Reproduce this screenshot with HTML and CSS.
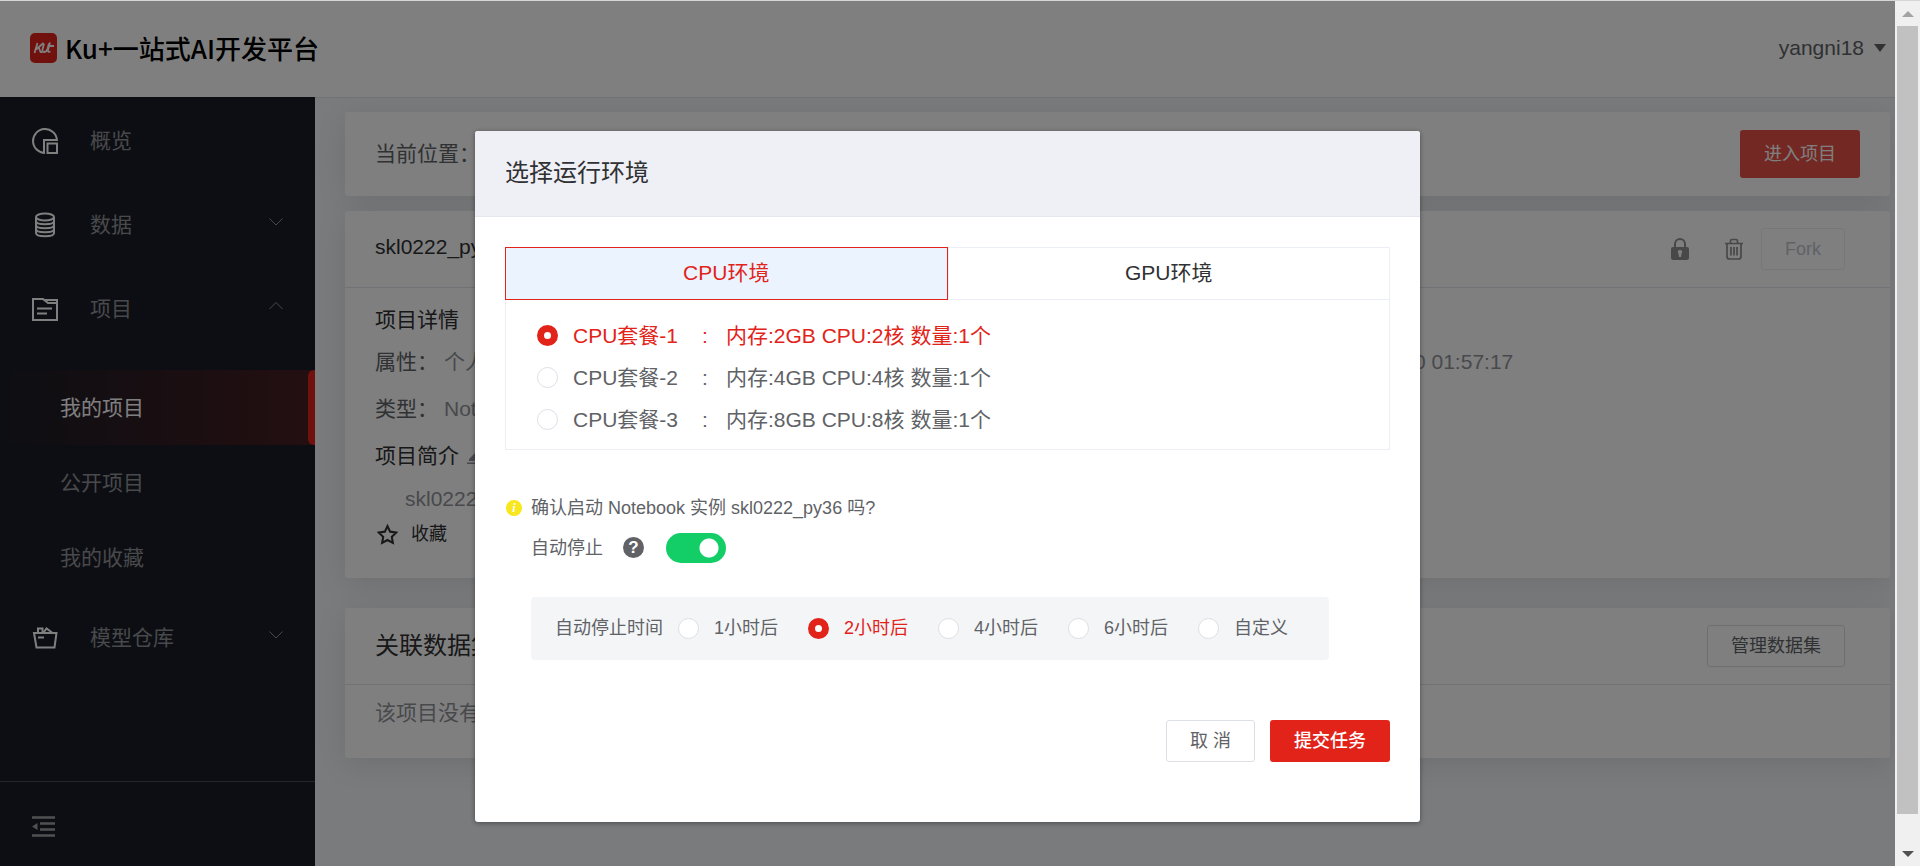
FILE: index.html
```html
<!DOCTYPE html>
<html lang="zh-CN">
<head>
<meta charset="utf-8">
<meta name="viewport" content="width=device-width, initial-scale=1">
<title>Ku+一站式AI开发平台</title>
<link rel="stylesheet" href="styles.css">
</head>
<body>
<div class="window">
  <div class="viewport">
    <header class="topbar">
      <div class="brand">
        <svg class="brand-logo" viewBox="0 0 27 30"><rect width="27" height="30" rx="5" fill="#e2231a"/><g fill="none" stroke="#fff" stroke-width="1.800" stroke-linejoin="round"><path d="M7.500 10 4.500 20M13.500 10 6 16.500M9 15l1.500 4h2"/><path d="M14 10.500l-1.500 6q-.3 3 2 2.500t3-3l1.500-5.500M20 9.500l-2 7.500q-.3 2.500 2.500 1.500M17.500 13h6.500"/></g></svg>
        <h1 class="brand-name">Ku+一站式AI开发平台</h1>
      </div>
      <button class="user" type="button">yangni18 <span class="caret"></span></button>
    </header>
    <div class="layout">
      <nav class="sidebar">
        <ul class="menu">
          <li><a class="menu-item" href="#"><svg class="menu-icon" viewBox="0 0 26 26"><path d="M13 25A12 12 0 1 1 25 12H12v13" /><rect x="15.500" y="15.500" width="9.500" height="9.500"/></svg><span>概览</span></a></li>
          <li><a class="menu-item" href="#"><svg class="menu-icon" viewBox="0 0 26 26"><ellipse cx="13" cy="5" rx="9" ry="3.500"/><path d="M4 5v16c0 4.300 18 4.300 18 0V5M4 9c0 4.300 18 4.300 18 0M4 13c0 4.300 18 4.300 18 0M4 17c0 4.300 18 4.300 18 0"/></svg><span>数据</span><svg class="chevron" viewBox="0 0 14 8"><path d="M.5.500 7 7 13.500.500"/></svg></a></li>
          <li><a class="menu-item" href="#"><svg class="menu-icon" viewBox="0 0 26 26"><path d="M1 3h10l5 4h9v17H1zM12 4h13v4M5 12.500h15M5 17.500h10"/></svg><span>项目</span><svg class="chevron" viewBox="0 0 14 8"><path d="M.5 7 7 .500 13.500 7"/></svg></a>
            <ul class="submenu">
              <li><a class="sub-item active" href="#">我的项目</a></li>
              <li><a class="sub-item" href="#">公开项目</a></li>
              <li><a class="sub-item" href="#">我的收藏</a></li>
            </ul>
          </li>
          <li><a class="menu-item" href="#"><svg class="menu-icon" viewBox="0 0 26 26"><path d="M2 8h22.500l-2 14.500h-18zM6 8V3.500h4.500V8M12 7l2.500-3.500L20 7.500M6 12.500h6"/></svg><span>模型仓库</span><svg class="chevron" viewBox="0 0 14 8"><path d="M.5.500 7 7 13.500.500"/></svg></a></li>
        </ul>
        <button class="collapse" type="button" aria-label="收起菜单"><svg viewBox="0 0 23 22"><path d="M0 1.500h23M8 7.500h15M8 13.500h15M0 19.500h23" stroke-width="2.500"/><path class="solid" d="M0 10.500 5.500 7v7z"/></svg></button>
      </nav>
      <main class="content">
        <section class="card location">
          <span>当前位置：</span>
          <button class="btn btn-enter" type="button">进入项目</button>
        </section>
        <section class="card project">
          <div class="card-head">
            <h2 class="project-name">skl0222_py36</h2>
            <div class="tools">
              <button class="icon-btn" type="button" aria-label="锁定"><svg viewBox="0 0 18 22"><path d="M4 10V6a5 5 0 0 1 10 0v4" fill="none" stroke="currentColor" stroke-width="2"/><path fill="currentColor" fill-rule="evenodd" d="M2 9h14q2 0 2 2v9q0 2-2 2H2q-2 0-2-2v-9q0-2 2-2zM9 12a2 2 0 0 0-1.500 3.500L8 19h2l.5-3.500A2 2 0 0 0 9 12z"/></svg></button>
              <button class="icon-btn" type="button" aria-label="删除"><svg viewBox="0 0 18 22"><path d="M0 5.500h18M5.500 5V3q0-1.500 1.500-1.500h4q1.500 0 1.500 1.500v2M2 6v12.500Q2 21 4.500 21h9q2.500 0 2.500-2.500V6M6 9v8.500M9 9v8.500M12 9v8.500" fill="none" stroke="currentColor" stroke-width="1.700"/></svg></button>
              <button class="btn btn-plain btn-fork" type="button" disabled>Fork</button>
            </div>
          </div>
          <div class="project-body">
            <h3 class="sub-title">项目详情</h3>
            <div class="info"><span class="key">属性：</span><span class="val">个人</span><span class="created">0 01:57:17</span></div>
            <div class="info"><span class="key">类型：</span><span class="val">Notebook</span></div>
            <h3 class="sub-title intro">项目简介 <svg class="pencil" viewBox="0 0 18 18"><path d="M2 12 12 2l4 4L7 14H2zM0 15.500h18V17H0z"/></svg></h3>
            <p class="desc">skl0222_py36</p>
            <button class="favorite" type="button"><svg viewBox="0 0 20 20"><path d="M10 2l2.500 5.300 5.800.8-4.200 4.100 1 5.800L10 15.200 4.900 18l1-5.800L1.700 8.100l5.800-.8z"/></svg>收藏</button>
          </div>
        </section>
        <section class="card dataset">
          <div class="card-head">
            <h2 class="dataset-title">关联数据集</h2>
            <button class="btn btn-plain" type="button">管理数据集</button>
          </div>
          <p class="empty">该项目没有</p>
        </section>
      </main>
    </div>
    <div class="overlay">
      <form class="dialog" role="dialog" aria-labelledby="dialog-title">
        <h2 class="dialog-title" id="dialog-title">选择运行环境</h2>
        <div class="dialog-body">
          <div class="env">
            <div class="tabs" role="tablist">
              <button class="tab selected" type="button" role="tab" aria-selected="true">CPU环境</button>
              <button class="tab" type="button" role="tab" aria-selected="false">GPU环境</button>
            </div>
            <div class="plans">
              <label class="plan"><input class="radio" type="radio" name="plan" checked><span class="plan-name">CPU套餐-1</span><span class="colon">:</span><span>内存:2GB CPU:2核 数量:1个</span></label>
              <label class="plan"><input class="radio" type="radio" name="plan"><span class="plan-name">CPU套餐-2</span><span class="colon">:</span><span>内存:4GB CPU:4核 数量:1个</span></label>
              <label class="plan"><input class="radio" type="radio" name="plan"><span class="plan-name">CPU套餐-3</span><span class="colon">:</span><span>内存:8GB CPU:8核 数量:1个</span></label>
            </div>
          </div>
          <div class="confirm">
            <span class="info-dot">i</span>
            <p class="question">确认启动 Notebook 实例 skl0222_py36 吗?</p>
          </div>
          <div class="auto-stop">
            <label for="auto-stop">自动停止</label>
            <span class="help">?</span>
            <input class="switch" id="auto-stop" type="checkbox" role="switch" checked>
          </div>
          <div class="times">
            <span>自动停止时间</span>
            <div class="time-list">
              <label class="time"><input class="radio" type="radio" name="time"><span>1小时后</span></label>
              <label class="time"><input class="radio" type="radio" name="time" checked><span>2小时后</span></label>
              <label class="time"><input class="radio" type="radio" name="time"><span>4小时后</span></label>
              <label class="time"><input class="radio" type="radio" name="time"><span>6小时后</span></label>
              <label class="time"><input class="radio" type="radio" name="time"><span>自定义</span></label>
            </div>
          </div>
          <div class="actions">
            <button class="btn btn-plain" type="button">取 消</button>
            <button class="btn btn-submit" type="submit">提交任务</button>
          </div>
        </div>
      </form>
    </div>
  </div>
  <div class="scrollbar" aria-hidden="true">
    <span class="arrow up"></span>
    <span class="thumb"></span>
    <span class="arrow down"></span>
  </div>
</div>
</body>
</html>
```
FILE: styles.css
```css
* { box-sizing: border-box; }
body {
  margin: 0;
  color: #606266;
  font-family: "Liberation Sans", "Noto Sans CJK SC", sans-serif;
  font-size: 21px;
  line-height: 30px;
}
h1, h2, h3, p, ul { margin: 0; padding: 0; font-weight: 400; }
ul { list-style: none; }
a { color: inherit; text-decoration: none; }
button { margin: 0; padding: 0; border: 0; background: none; color: inherit; font: inherit; cursor: pointer; }
svg { display: block; }

.window { display: flex; height: 100vh; border-top: 1px solid #d4d6d8; overflow: hidden; }
.viewport { position: relative; display: flex; flex: 1; flex-direction: column; min-width: 0; }

.topbar { display: flex; align-items: center; justify-content: space-between; height: 96px; padding: 0 9px 2px 30px; background: #fff; }
.brand { display: flex; align-items: center; gap: 8px; }
.brand-logo { width: 27px; height: 30px; }
.brand-name { color: #000; font-family: "Noto Sans CJK SC", sans-serif; font-size: 26px; font-weight: 500; white-space: nowrap; }
.user { display: flex; align-items: center; gap: 10px; color: #606266; }
.caret { border: 6px solid transparent; border-top: 8px solid #606266; border-bottom: 0; }

.layout { display: flex; flex: 1; min-height: 0; }
.sidebar { display: flex; flex-direction: column; justify-content: space-between; width: 315px; background: #1a1c26; color: #909297; }
.menu { padding-top: 2px; }
.menu-item { display: flex; align-items: center; height: 84px; padding: 0 32px; }
.menu-item span { flex: 1; margin-left: 32px; }
.menu-icon { width: 26px; height: 26px; fill: none; stroke: #fff; stroke-width: 2; }
.chevron { width: 14px; height: 8px; margin-bottom: 6px; fill: none; stroke: #909297; stroke-width: 1; }
.submenu { padding: 19px 0 1px; }
.sub-item { display: flex; align-items: center; justify-content: space-between; height: 75px; padding-left: 60px; }
.sub-item.active { background: linear-gradient(90deg, #1a1c26, #481e22); color: #fff; }
.sub-item.active::after { align-self: stretch; width: 7px; border-radius: 6px 0 0 6px; background: #e2231a; content: ""; }
.collapse { height: 85px; padding: 5px 0 0 32px; border-top: 1px solid #4a4b52; }
.collapse svg { width: 23px; height: 22px; fill: none; stroke: #a0a1a5; }
.collapse .solid { fill: #a0a1a5; stroke: none; }

.content { display: flex; flex: 1; flex-direction: column; min-width: 0; padding: 14px 5px 0 30px; border-top: 1px solid #e2e4ea; background: #f4f6fa; overflow: hidden; }
.card { flex: none; border-radius: 3px; background: #fff; box-shadow: 0 6px 30px rgba(0, 0, 0, 0.1); }
.location { display: flex; align-items: center; justify-content: space-between; height: 84px; margin-bottom: 15px; padding: 0 30px; }
.card-head { display: flex; align-items: center; justify-content: space-between; height: 77px; padding: 0 45px 0 30px; border-bottom: 1px solid #e2e4ea; }
.project { margin-bottom: 30px; }
.project-name { padding-bottom: 5px; color: #303133; font-size: 21px; }
.tools { display: flex; align-items: center; }
.icon-btn { margin-right: 36px; color: #909090; }
.icon-btn svg { width: 18px; height: 22px; }
.icon-btn + .btn { margin-left: -18px; }
.project-body { padding: 17px 30px 29px; }
.sub-title { color: #303133; font-size: 21px; }
.info { display: flex; height: 47px; padding-top: 12px; }
.info .key { width: 69px; }
.info .val { width: 970px; color: #909399; }
.created { color: #909399; }
.intro { display: flex; align-items: center; gap: 8px; padding-top: 12px; }
.pencil { width: 18px; height: 18px; fill: #909399; }
.desc { padding: 13px 30px 0; color: #909399; }
.favorite { display: flex; align-items: center; gap: 13px; margin-top: 5px; padding-left: 2px; color: #303133; font-size: 18px; }
.favorite svg { width: 21px; height: 21px; fill: none; stroke: #303133; stroke-width: 2; }
.dataset-title { color: #303133; font-size: 24px; }
.empty { padding: 13px 30px 30px; color: #909399; }

.btn { height: 42px; padding: 0 24px; border-radius: 3px; font-size: 18px; white-space: nowrap; }
.btn-plain { padding: 0 23px; border: 1px solid #dcdfe6; background: #fff; color: #606266; }
.btn-plain:disabled { border-color: #ebeef5; color: #c0c4cc; }
.btn-enter { height: 48px; background: #e75048; color: #fff; }
.btn-submit { background: #e2231a; color: #fff; font-weight: 500; }

.overlay { position: absolute; inset: 0; display: flex; align-items: flex-start; justify-content: center; padding-top: 15vh; background: rgba(0, 0, 0, 0.5); }
.dialog { width: 90%; max-width: 945px; border-radius: 3px; background: #fff; box-shadow: 0 1px 5px rgba(0, 0, 0, 0.4); overflow: hidden; }
.dialog-title { height: 86px; padding: 27px 30px; border-bottom: 1px solid #e4e7ed; background: #eff0f6; color: #303133; font-size: 24px; }
.dialog-body { padding: 30px 30px 60px; }
.env { border: 1px solid #ebeef5; }
.tabs { display: flex; margin: -1px; }
.tab { flex: 1; height: 53px; border: 1px solid #ebeef5; color: #303133; }
.tab.selected { border-color: #e2231a; background: #ebf3ff; color: #e2231a; }
.plans { padding: 16px 31px 8px; }
.plan { display: flex; align-items: center; height: 42px; }
.plan-name { width: 129px; }
.colon { width: 24px; }
.radio { flex: none; width: 21px; height: 21px; margin: 0 15px 0 0; border: 1px solid #dcdfe6; border-radius: 50%; background: #fff; appearance: none; }
.radio:checked { border: 7px solid #e2231a; }
.radio:checked ~ span { color: #e2231a; }
.confirm { display: flex; align-items: center; gap: 9px; margin-top: 43px; padding-left: 1px; font-size: 18px; }
.info-dot { display: grid; place-items: center; width: 16px; height: 16px; border-radius: 50%; background: #f8e71c; color: #fff; font: italic bold 12px/16px "Liberation Serif", serif; }
.auto-stop { display: flex; align-items: center; margin: 10px 0 34px 26px; font-size: 18px; }
.help { display: grid; place-items: center; width: 21px; height: 21px; margin: 0 22px 0 20px; border-radius: 50%; background: #606266; color: #fff; font-size: 17px; font-weight: 700; line-height: 21px; }
.switch { width: 60px; height: 30px; margin: 0; border-radius: 15px; background: radial-gradient(circle at 43px 15px, #fff 9px, #13ce66 10px); appearance: none; }
.times { display: flex; align-items: center; gap: 15px; width: fit-content; height: 63px; margin-left: 26px; padding: 0 41px 0 24px; border-radius: 4px; background: #f4f5f7; font-size: 18px; }
.time-list { display: flex; gap: 30px; }
.time { display: flex; align-items: center; }
.actions { display: flex; justify-content: flex-end; gap: 15px; margin-top: 60px; }

.scrollbar { display: flex; flex-direction: column; width: 25px; padding: 0 2px; background: #f0f0f0; }
.thumb { flex: 1; margin-bottom: 27px; background: #c1c1c1; }
.arrow { display: grid; place-items: center; height: 25px; }
.arrow::after { border: 6px solid transparent; content: ""; }
.up::after { border-top: 0; border-bottom-color: #a3a3a3; }
.down::after { border-top-color: #505050; border-bottom: 0; }
```
